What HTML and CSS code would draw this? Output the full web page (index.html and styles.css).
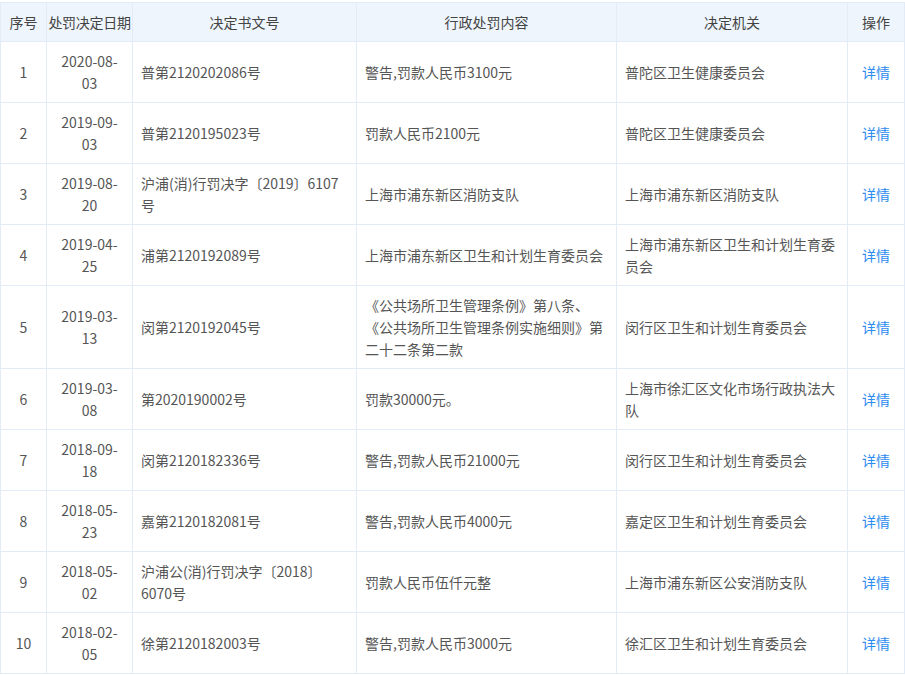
FILE: index.html
```html
<!DOCTYPE html>
<html lang="zh-CN">
<head>
<meta charset="utf-8">
<title>行政处罚</title>
<link rel="stylesheet" href="styles.css">
</head>
<body>
<div class="wrap">
<table class="grid">
<colgroup>
<col class="c-no"><col class="c-date"><col class="c-doc"><col class="c-content"><col class="c-org"><col class="c-op">
</colgroup>
<thead>
<tr><th>序号</th><th class="tight">处罚决定日期</th><th>决定书文号</th><th>行政处罚内容</th><th>决定机关</th><th>操作</th></tr>
</thead>
<tbody>
<tr><td class="ctr">1</td><td class="ctr">2020-08-03</td><td>普第2120202086号</td><td>警告,罚款人民币3100元</td><td>普陀区卫生健康委员会</td><td class="ctr"><a class="link" href="#">详情</a></td></tr>
<tr><td class="ctr">2</td><td class="ctr">2019-09-03</td><td>普第2120195023号</td><td>罚款人民币2100元</td><td>普陀区卫生健康委员会</td><td class="ctr"><a class="link" href="#">详情</a></td></tr>
<tr><td class="ctr">3</td><td class="ctr">2019-08-20</td><td>沪浦(消)行罚决字〔2019〕6107号</td><td>上海市浦东新区消防支队</td><td>上海市浦东新区消防支队</td><td class="ctr"><a class="link" href="#">详情</a></td></tr>
<tr><td class="ctr">4</td><td class="ctr">2019-04-25</td><td>浦第2120192089号</td><td>上海市浦东新区卫生和计划生育委员会</td><td>上海市浦东新区卫生和计划生育委员会</td><td class="ctr"><a class="link" href="#">详情</a></td></tr>
<tr><td class="ctr">5</td><td class="ctr">2019-03-13</td><td>闵第2120192045号</td><td>《公共场所卫生管理条例》第八条、《公共场所卫生管理条例实施细则》第二十二条第二款</td><td>闵行区卫生和计划生育委员会</td><td class="ctr"><a class="link" href="#">详情</a></td></tr>
<tr><td class="ctr">6</td><td class="ctr">2019-03-08</td><td>第2020190002号</td><td>罚款30000元。</td><td>上海市徐汇区文化市场行政执法大队</td><td class="ctr"><a class="link" href="#">详情</a></td></tr>
<tr><td class="ctr">7</td><td class="ctr">2018-09-18</td><td>闵第2120182336号</td><td>警告,罚款人民币21000元</td><td>闵行区卫生和计划生育委员会</td><td class="ctr"><a class="link" href="#">详情</a></td></tr>
<tr><td class="ctr">8</td><td class="ctr">2018-05-23</td><td>嘉第2120182081号</td><td>警告,罚款人民币4000元</td><td>嘉定区卫生和计划生育委员会</td><td class="ctr"><a class="link" href="#">详情</a></td></tr>
<tr><td class="ctr">9</td><td class="ctr">2018-05-02</td><td>沪浦公(消)行罚决字〔2018〕6070号</td><td>罚款人民币伍仟元整</td><td>上海市浦东新区公安消防支队</td><td class="ctr"><a class="link" href="#">详情</a></td></tr>
<tr><td class="ctr">10</td><td class="ctr">2018-02-05</td><td>徐第2120182003号</td><td>警告,罚款人民币3000元</td><td>徐汇区卫生和计划生育委员会</td><td class="ctr"><a class="link" href="#">详情</a></td></tr>
</tbody>
</table>
</div>
</body>
</html>
```

FILE: styles.css
```css
html, body {
  margin: 0;
  padding: 0;
  background: #ffffff;
}
body {
  font-family: "Noto Sans CJK SC", "Noto Sans", "Liberation Sans", sans-serif;
  font-size: 14px;
  line-height: 22px;
  color: #555555;
}
.wrap {
  padding: 2px 1px 0 0;
}
.grid {
  width: 904px;
  border-collapse: collapse;
  table-layout: fixed;
}
.c-no { width: 46px; }
.c-date { width: 86px; }
.c-doc { width: 224px; }
.c-content { width: 260px; }
.c-org { width: 231px; }
.c-op { width: 57px; }
.grid th,
.grid td {
  border: 1px solid #e3ecf6;
  padding: 8px 8px;
  vertical-align: middle;
  text-align: left;
  word-break: break-word;
}
.grid th {
  background: #eef5fc;
  font-weight: normal;
  color: #444444;
  text-align: center;
  padding: 8px 0;
  white-space: nowrap;
}
.grid th.tight {
  letter-spacing: -0.3px;
}
.grid td.ctr {
  text-align: center;
}
.link {
  color: #2d8cf0;
  text-decoration: none;
}
```
